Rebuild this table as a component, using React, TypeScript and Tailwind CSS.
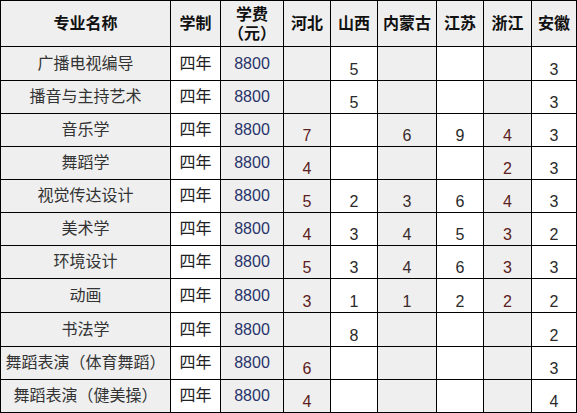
const provinces = ["河北", "山西", "内蒙古", "江苏", "浙江", "安徽"];

const rows: { name: string; h: string; nums: string[] }[] = [
  { name: "广播电视编导", h: "h-[33px]", nums: ["", "5", "", "", "", "3"] },
  { name: "播音与主持艺术", h: "h-[32px]", nums: ["", "5", "", "", "", "3"] },
  { name: "音乐学", h: "h-[32px]", nums: ["7", "", "6", "9", "4", "3"] },
  { name: "舞蹈学", h: "h-[32px]", nums: ["4", "", "", "", "2", "3"] },
  { name: "视觉传达设计", h: "h-[32px]", nums: ["5", "2", "3", "6", "4", "3"] },
  { name: "美术学", h: "h-[32px]", nums: ["4", "3", "4", "5", "3", "2"] },
  { name: "环境设计", h: "h-[32px]", nums: ["5", "3", "4", "6", "3", "3"] },
  { name: "动画", h: "h-[33px]", nums: ["3", "1", "1", "2", "2", "2"] },
  { name: "书法学", h: "h-[33px]", nums: ["", "8", "", "", "", "2"] },
  { name: "舞蹈表演（体育舞蹈）", h: "h-[32px]", nums: ["6", "", "", "", "", "3"] },
  { name: "舞蹈表演（健美操）", h: "h-[32px]", nums: ["4", "", "", "", "", "4"] },
];

// background + text colour per province column
const provinceCell = [
  "bg-[#efefef] text-[#5c2020]",
  "bg-white text-[#2a2a2a]",
  "bg-[#efefef] text-[#3a2a2a]",
  "bg-white text-[#2a2a2a]",
  "bg-[#efefef] text-[#5c2020]",
  "bg-white text-[#2a2a2a]",
];

const cjk = "font-['Liberation_Sans','Noto_Sans_CJK_SC',sans-serif]";

export default function App() {
  return (
    <div className={`w-[577px] h-[413px] bg-white ${cjk}`}>
      <div className="grid grid-cols-[169px_49px_62px_46px_46px_58px_46px_47px_44px] gap-px bg-black p-px">
        <div className="h-[45px] bg-[#efefef] flex items-center justify-center text-[16px] font-bold text-[#111]">
          专业名称
        </div>
        <div className="bg-[#efefef] flex items-center justify-center text-[16px] font-bold text-[#111]">
          学制
        </div>
        <div className="bg-[#efefef] flex flex-col items-center justify-center text-[16px] font-bold leading-[19px] text-[#111]">
          <span>学费</span>
          <span>（元）</span>
        </div>
        {provinces.map((p) => (
          <div
            key={p}
            className="bg-[#efefef] flex items-center justify-center text-[16px] font-bold text-[#111] whitespace-nowrap"
          >
            {p}
          </div>
        ))}

        {rows.map((r) => (
          <Row key={r.name} {...r} />
        ))}
      </div>
    </div>
  );
}

function Row({ name, h, nums }: { name: string; h: string; nums: string[] }) {
  return (
    <>
      <div
        className={`${h} bg-[#efefef] flex items-center justify-center text-[16px] text-[#333] whitespace-nowrap`}
      >
        {name}
      </div>
      <div className="bg-white flex items-center justify-center text-[16px] text-[#222]">
        四年
      </div>
      <div className="bg-[#efefef] flex items-center justify-center text-[16px] text-[#28336a]">
        8800
      </div>
      {nums.map((n, i) => (
        <div
          key={i}
          className={`${provinceCell[i]} flex items-end justify-center text-[16px] leading-[20px]`}
        >
          {n}
        </div>
      ))}
    </>
  );
}
